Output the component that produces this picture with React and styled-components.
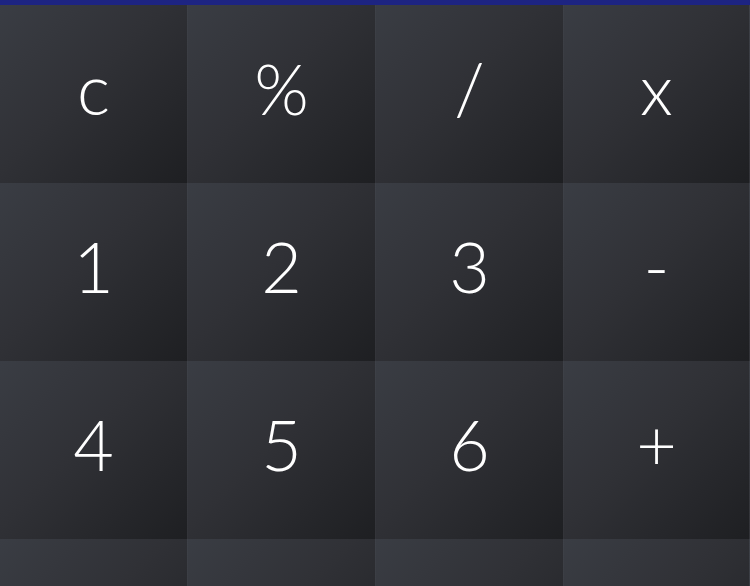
import React from 'react';
import styled, { createGlobalStyle } from 'styled-components';

const GlobalStyle = createGlobalStyle`
  html, body {
    margin: 0;
    padding: 0;
    background: #1f2023;
    overflow: hidden;
  }
`;

const Screen = styled.div`
  width: 750px;
  height: 586px;
  display: flex;
  flex-direction: column;
  overflow: hidden;
  font-family: Lato, "Open Sans", "Liberation Sans", sans-serif;
`;

const TopBar = styled.div`
  height: 5px;
  flex: none;
  background: #1d2482;
`;

const Keypad = styled.div`
  display: grid;
  grid-template-columns: 188px 188px 188px 186px;
  grid-auto-rows: 178px;
`;

const Key = styled.button`
  display: flex;
  align-items: center;
  justify-content: center;
  border: none;
  border-right: 1px solid rgba(255, 255, 255, 0.025);
  margin: 0;
  padding: 0 0 12px 0;
  color: #ffffff;
  font-family: inherit;
  font-size: 70px;
  font-weight: 300;
  background: linear-gradient(135deg, #3a3d44 0%, #303136 45%, #1e1f22 100%);
  cursor: pointer;
`;

const keys = ['c', '%', '/', 'x', '1', '2', '3', '-', '4', '5', '6', '+', '', '', '', ''];

export default function App() {
  return (
    <>
      <GlobalStyle />
      <Screen>
        <TopBar />
        <Keypad>
          {keys.map((k, i) => (
            <Key key={i}>{k}</Key>
          ))}
        </Keypad>
      </Screen>
    </>
  );
}
